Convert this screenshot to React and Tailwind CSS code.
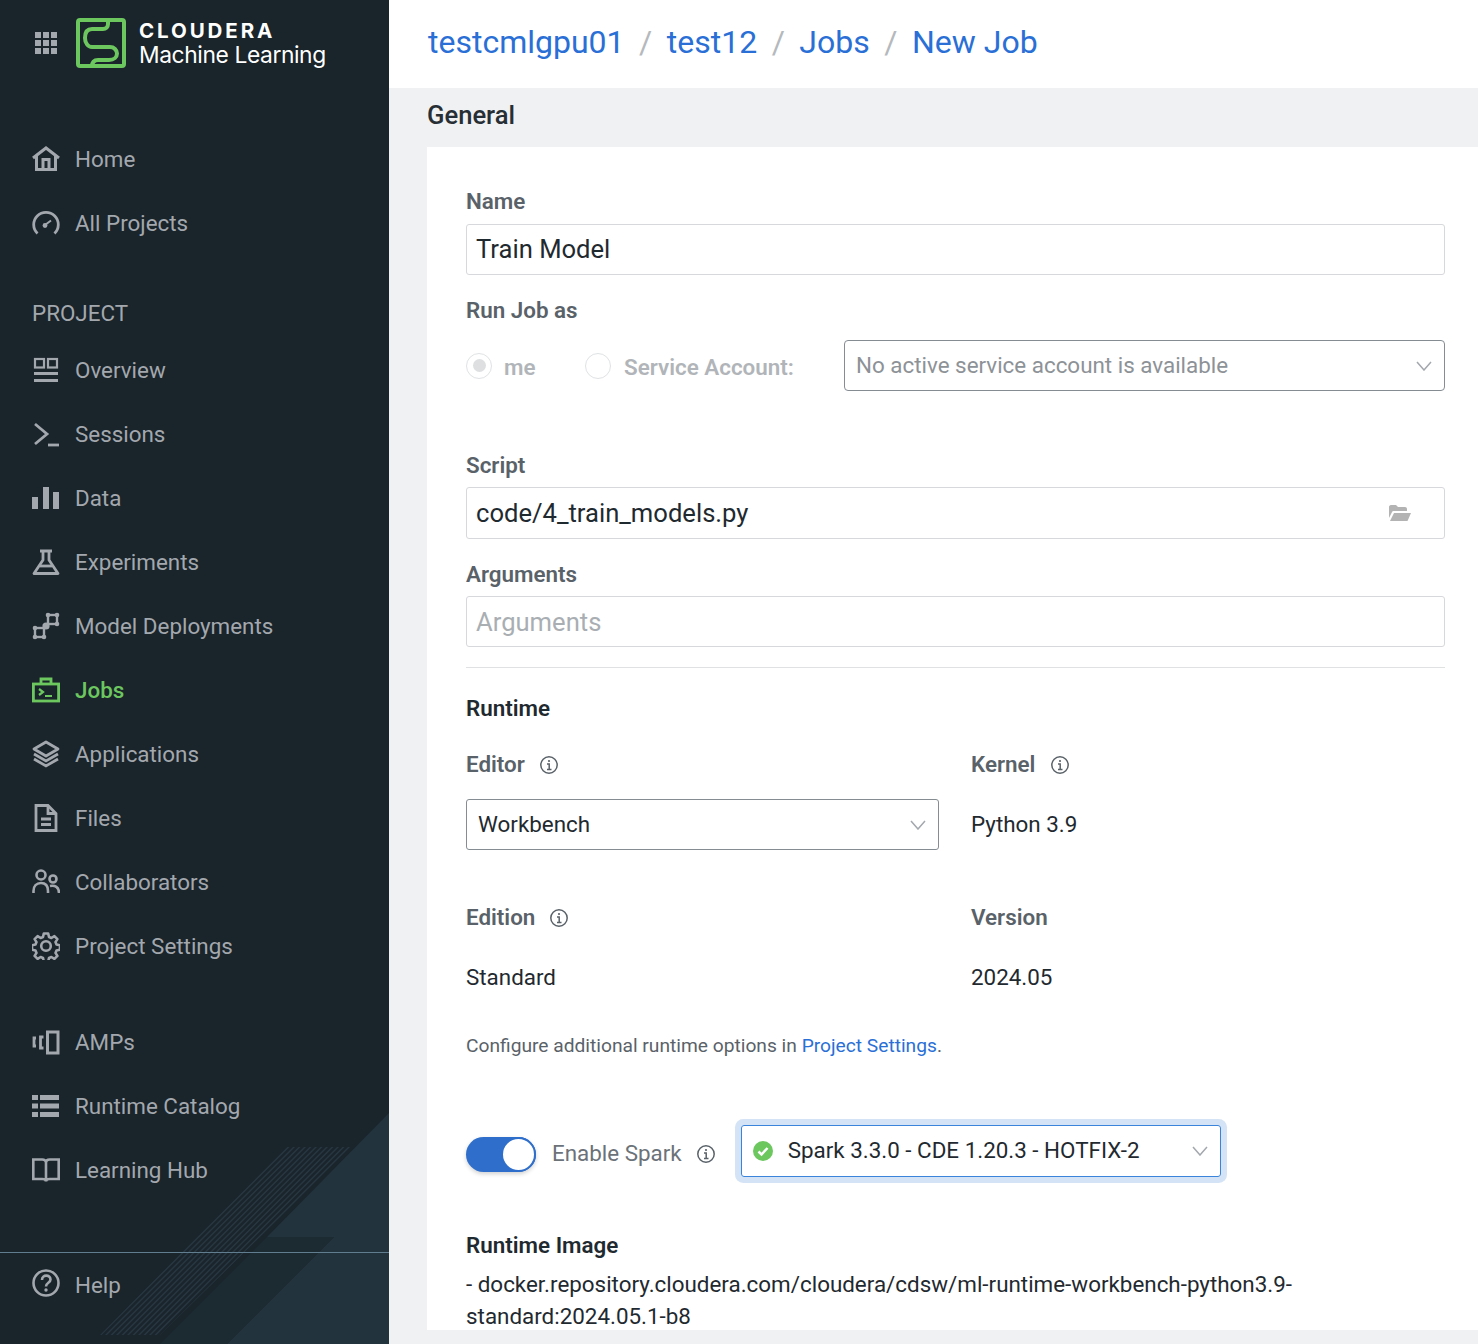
import React from "react";

const Stroke = ({ children, sw = 2.6 }) => (
  <svg viewBox="0 0 28 28" className="w-7 h-7 shrink-0" fill="none" stroke="currentColor" strokeWidth={sw}>
    {children}
  </svg>
);

const icons = {
  home: (
    <Stroke sw={3}>
      <path d="M1 13 14 3l13 10" />
      <path d="M4.500 11v13.500h19V11M11 24V14.500h6V24" />
    </Stroke>
  ),
  gauge: (
    <Stroke sw={2.8}>
      <path d="M5.500 24.500A12.300 12.300 0 1 1 22.500 24.500" />
      <path d="M13 16l6-4.500" strokeWidth="2" />
      <circle cx="13" cy="16.500" r="2.400" fill="currentColor" stroke="none" />
    </Stroke>
  ),
  overview: (
    <Stroke sw={2.2}>
      <rect x="3" y="3" width="9" height="8.500" />
      <rect x="16" y="3" width="9" height="8.500" />
      <path d="M2 17.500h24M2 24.500h24" strokeWidth="3" />
    </Stroke>
  ),
  sessions: (
    <Stroke sw={2.8}>
      <path d="M3 4l12 10L3 24" />
      <path d="M16 25h11" />
    </Stroke>
  ),
  data: (
    <svg viewBox="0 0 28 28" className="w-7 h-7 shrink-0" fill="currentColor">
      <rect x="0" y="13" width="6" height="12" />
      <rect x="11" y="3" width="6" height="22" />
      <rect x="21" y="8" width="6" height="17" />
    </svg>
  ),
  experiments: (
    <Stroke sw={2.8}>
      <path d="M8 3h12M11 3v9L2 25.500h24L17 12V3" strokeLinejoin="round" />
      <path d="M8 18h12" />
    </Stroke>
  ),
  model: (
    <Stroke sw={2.4}>
      <rect x="16" y="3" width="9" height="9" />
      <rect x="3" y="16" width="9" height="9" />
      <circle cx="14" cy="14" r="3.600" fill="currentColor" stroke="none" />
      <circle cx="16" cy="3" r="2.300" fill="currentColor" stroke="none" />
      <circle cx="25" cy="3" r="2.300" fill="currentColor" stroke="none" />
      <circle cx="25" cy="12" r="2.300" fill="currentColor" stroke="none" />
      <circle cx="3" cy="16" r="2.300" fill="currentColor" stroke="none" />
      <circle cx="3" cy="25" r="2.300" fill="currentColor" stroke="none" />
      <circle cx="12" cy="25" r="2.300" fill="currentColor" stroke="none" />
    </Stroke>
  ),
  jobs: (
    <Stroke sw={2.8}>
      <rect x="1.400" y="8" width="25.200" height="17" />
      <path d="M9 8V3h10v5" />
      <path d="M7 13l4 3-4 3M13 20h7" strokeWidth="2.200" />
    </Stroke>
  ),
  apps: (
    <Stroke sw={2.8}>
      <path d="M14 2 2 9l12 7 12-7z" strokeLinejoin="round" />
      <path d="M2 14l12 7 12-7M2 19l12 7 12-7" />
    </Stroke>
  ),
  files: (
    <Stroke sw={2.8}>
      <path d="M4 1.500h12l8 8v17H4z" />
      <path d="M16 1.500v8h8M9 15h10M9 20.500h10" />
    </Stroke>
  ),
  users: (
    <Stroke sw={2.6}>
      <circle cx="9" cy="7" r="4.500" />
      <circle cx="21" cy="11" r="3.500" />
      <path d="M1.500 25v-2c0-5 3-8 7.500-8s7 3 7 8v2M18 18c5-1 9 1 9 7" />
    </Stroke>
  ),
  settings: (
    <Stroke sw={2.6}>
      <path
        d="M11.800 1.500h4.400l.8 3.500 2.400 1 3-1.900 3 3-1.900 3 1 2.400 3.500.8v4.400l-3.500.8-1 2.400 1.900 3-3 3-3-1.900-2.400 1-.8 3.500h-4.400l-.8-3.500-2.400-1-3 1.900-3-3 1.900-3-1-2.400-3.500-.8v-4.400l3.500-.8 1-2.400-1.900-3 3-3 3 1.900 2.400-1z"
        strokeLinejoin="round"
      />
      <circle cx="14" cy="14" r="4.800" />
    </Stroke>
  ),
  amps: (
    <svg viewBox="0 0 28 28" className="w-7 h-7 shrink-0" fill="none" stroke="currentColor">
      <rect x="15.500" y="4" width="10.500" height="21" strokeWidth="3" />
      <path d="M11.500 9H8.500v11h3" strokeWidth="2.800" />
      <path d="M4 10H2v8h2" strokeWidth="2.800" />
    </svg>
  ),
  catalog: (
    <svg viewBox="0 0 28 28" className="w-7 h-7 shrink-0" fill="currentColor">
      <rect x="0" y="3" width="6" height="5" />
      <rect x="8" y="3" width="19" height="5" />
      <rect x="0" y="11.500" width="6" height="5" />
      <rect x="8" y="11.500" width="19" height="5" />
      <rect x="0" y="20" width="6" height="5" />
      <rect x="8" y="20" width="19" height="5" />
    </svg>
  ),
  book: (
    <Stroke sw={2.6}>
      <path d="M1.300 3.500h9c2 0 3.700 1 3.700 3v19c0-2-1.700-2.500-3.700-2.500h-9zM26.700 3.500h-9c-2 0-3.700 1-3.700 3v19c0-2 1.700-2.500 3.700-2.500h9z" />
    </Stroke>
  ),
  help: (
    <span className="-mt-[5px]">
      <Stroke sw={2.6}>
        <circle cx="14" cy="14" r="12.500" />
        <path d="M10 11c0-6 8.500-5.500 8.500-.5 0 3.500-4.500 3-4.500 7" />
        <circle cx="14" cy="21" r="1.700" fill="currentColor" stroke="none" />
      </Stroke>
    </span>
  ),
};

const NavItem = ({ icon, label, active }) => (
  <div className={`h-16 pl-8 flex items-center gap-[15px] ${active ? "text-[#6cc75f] font-medium" : "text-[#a3a8ae]"}`}>
    {icons[icon]}
    <span className="text-[22.400px] pt-[2px]">{label}</span>
  </div>
);

const SidebarArt = () => {
  const stripes = [];
  for (let i = 0; i < 13; i++) stripes.push(i);
  return (
    <svg className="absolute inset-0 w-[389px] h-[1344px]" viewBox="0 0 389 1344">
      <defs>
        <clipPath id="stripe-clip">
          <path d="M285 1147H352L160 1335H100Z" />
        </clipPath>
      </defs>
      <path d="M389 1113V1344H227L334 1237H267Z" fill="#22333d" />
      <path d="M267 1237H334L227 1344H160Z" fill="#1c2a32" />
      <g clipPath="url(#stripe-clip)" stroke="#273741" strokeWidth="1.500">
        {stripes.map((i) => (
          <line key={i} x1={290 + i * 5.5} y1="1140" x2={90 + i * 5.5} y2="1340" />
        ))}
      </g>
    </svg>
  );
};

const Sidebar = () => (
  <aside className="relative w-[389px] h-[1344px] shrink-0 bg-[#1a242b] overflow-hidden">
    <SidebarArt />
    <div className="relative">
      <div className="h-[127px] flex items-start">
        <div className="ml-[35px] mt-[32px] w-[22px] grid grid-cols-3 gap-[2px]">
          {[0, 1, 2, 3, 4, 5, 6, 7, 8].map((n) => (
            <span key={n} className="h-[6px] bg-[#a3a8ae]" />
          ))}
        </div>
        <svg viewBox="0 0 50 50" className="w-[50px] h-[50px] ml-[19px] mt-[18px] shrink-0" fill="none">
          <rect x="2" y="2" width="46" height="46" rx="2" stroke="#6cc75f" strokeWidth="4" />
          <path
            d="M32 2V6c0 3-2 5-5 5H16c-5 0-7 4-7 9s3 9 7 9h18c4 0 7 3 7 6.500S38 42 33 42H22c-4 0-6 2-6 6.500"
            stroke="#6cc75f"
            strokeWidth="4"
          />
        </svg>
        <div className="ml-[13px] mt-[18px] text-white font-['Inter',sans-serif]">
          <div className="text-[20.500px] leading-[25px] font-bold tracking-[2.900px]">CLOUDERA</div>
          <div className="text-[22.800px] leading-[24px] tracking-[-0.400px]">Machine Learning</div>
        </div>
      </div>
      <NavItem icon="home" label="Home" />
      <NavItem icon="gauge" label="All Projects" />
      <div className="mt-8 h-[51px] pl-8 pt-[2px] flex items-center text-[22.400px] text-[#a3a8ae]">PROJECT</div>
      <NavItem icon="overview" label="Overview" />
      <NavItem icon="sessions" label="Sessions" />
      <NavItem icon="data" label="Data" />
      <NavItem icon="experiments" label="Experiments" />
      <NavItem icon="model" label="Model Deployments" />
      <NavItem icon="jobs" label="Jobs" active />
      <NavItem icon="apps" label="Applications" />
      <NavItem icon="files" label="Files" />
      <NavItem icon="users" label="Collaborators" />
      <NavItem icon="settings" label="Project Settings" />
      <div className="mt-8" />
      <NavItem icon="amps" label="AMPs" />
      <NavItem icon="catalog" label="Runtime Catalog" />
      <NavItem icon="book" label="Learning Hub" />
      <div className="mt-[50px] border-t border-[#5f7d8f]" />
      <NavItem icon="help" label="Help" />
    </div>
  </aside>
);

const Label = ({ children, dark, className = "" }) => (
  <div className={`h-[30px] pt-[2px] flex items-center text-[22.400px] font-semibold ${dark ? "text-[#1f2a30]" : "text-[#5a6269]"} ${className}`}>
    {children}
  </div>
);

const Info = () => (
  <svg viewBox="0 0 20 20" className="w-5 h-5 shrink-0 text-[#5a6269]" fill="none" stroke="currentColor" strokeWidth="1.500">
    <circle cx="10" cy="10" r="8.200" />
    <path d="M8 9h2.200v5.500M8 14.500h4.500" />
    <circle cx="10" cy="6" r="1.100" fill="currentColor" stroke="none" />
  </svg>
);

const Chevron = () => (
  <svg viewBox="0 0 16 10" className="w-4 h-[10px] shrink-0 text-[#a3a8ae]" fill="none" stroke="currentColor" strokeWidth="1.500">
    <path d="M1 1l7 8 7-8" />
  </svg>
);

const TextInput = ({ children, muted, h = "h-[51px]" }) => (
  <div className={`${h} w-full border border-[#d6d8db] rounded-[3px] px-[9px] flex items-center text-[25.600px] ${muted ? "text-[#a9aeb3]" : "text-[#1f2a30]"}`}>
    {children}
  </div>
);

const Radio = ({ checked }) => (
  <span className="w-[26px] h-[26px] rounded-full border border-[#e0e2e4] flex items-center justify-center shrink-0">
    {checked && <span className="w-[13px] h-[13px] rounded-full bg-[#dedfe1]" />}
  </span>
);

const Value = ({ children }) => (
  <div className="mt-5 h-[51px] flex items-center text-[22.400px] text-[#1f2a30]">{children}</div>
);

const Main = () => (
  <main className="flex-1 min-w-0 h-[1344px] flex flex-col bg-[#f0f1f3] overflow-hidden font-['Roboto',sans-serif]">
    <div className="h-[88px] shrink-0 bg-white pl-[39px] pb-1 flex items-center text-[32px] text-[#2a6fd6]">
      <span>testcmlgpu01</span>
      <span className="mx-[14.500px] text-[#b5b9bd]">/</span>
      <span>test12</span>
      <span className="mx-[14.500px] text-[#b5b9bd]">/</span>
      <span>Jobs</span>
      <span className="mx-[14.500px] text-[#b5b9bd]">/</span>
      <span>New Job</span>
    </div>
    <div className="h-[59px] shrink-0 pl-[38px] pb-1 flex items-center text-[25.600px] font-medium text-[#272f35]">General</div>
    <div className="ml-[38px] h-[1183px] bg-white pt-[39px] pl-[39px] pr-[33px] overflow-hidden">
      <Label>Name</Label>
      <div className="mt-2">
        <TextInput>Train Model</TextInput>
      </div>
      <Label className="mt-5">Run Job as</Label>
      <div className="mt-[15px] flex items-center">
        <Radio checked />
        <span className="ml-[12px] w-[81px] pt-[5px] text-[22.400px] font-semibold text-[#b1b5b9]">me</span>
        <Radio />
        <span className="ml-[13px] w-[220px] pt-[5px] text-[22.400px] font-semibold text-[#b1b5b9]">Service Account:</span>
        <div className="flex-1 h-[51px] border border-[#858c92] rounded-[4px] pl-[11px] pr-3 flex items-center justify-between text-[22.400px] text-[#8d9297]">
          <span>No active service account is available</span>
          <Chevron />
        </div>
      </div>
      <Label className="mt-[59px]">Script</Label>
      <div className="mt-[7px]">
        <TextInput h="h-[52px]">
          <span className="flex-1">code/4_train_models.py</span>
          <svg viewBox="0 0 24 18" className="w-6 h-[18px] mr-[23px] text-[#b3b3b3]" fill="currentColor">
            <path d="M1 3c0-1 .7-2 2-2h5l2 2h7c1 0 2 .7 2 2v2H6c-1 0-1.800.5-2.200 1.400L1 14z" />
            <path d="M6 9h17l-3.500 8H2z" />
          </svg>
        </TextInput>
      </div>
      <Label className="mt-5">Arguments</Label>
      <div className="mt-[7px]">
        <TextInput muted>
          <span className="pt-[2px]">Arguments</span>
        </TextInput>
      </div>
      <div className="mt-5 border-t border-[#dfe1e3]" />
      <Label dark className="mt-[25px]">Runtime</Label>
      <div className="mt-[26px] grid grid-cols-[473px_1fr] gap-x-8">
        <Label className="gap-[14px]">Editor <Info /></Label>
        <Label className="gap-[15px]">Kernel <Info /></Label>
        <div className="mt-5 h-[51px] border border-[#858c92] rounded-[3px] pl-[11px] pr-3 flex items-center justify-between text-[22.400px] text-[#1f2a30]">
          <span>Workbench</span>
          <Chevron />
        </div>
        <Value>Python 3.9</Value>
        <Label className="mt-[52px] gap-[14px]">Edition <Info /></Label>
        <Label className="mt-[52px]">Version</Label>
        <Value>Standard</Value>
        <Value>2024.05</Value>
      </div>
      <div className="mt-[27px] h-[30px] pt-[2px] flex items-center text-[19.200px] text-[#5a6269] whitespace-pre">
        Configure additional runtime options in <span className="text-[#2a6fd6]">Project Settings</span>.
      </div>
      <div className="mt-[65px] flex items-start">
        <div className="mt-3 w-[70px] h-[35px] rounded-full bg-[#2f6fcb] flex justify-end items-center shadow-[0_2px_4px_rgba(0,0,0,0.18)] shrink-0">
          <span className="w-[35px] h-[35px] rounded-full bg-white border-2 border-[#2f6fcb]" />
        </div>
        <div className="ml-4 mt-[14px] h-[30px] flex items-center gap-[14px] text-[22.400px] text-[#6b7278]">
          Enable Spark <Info />
        </div>
        <div className="ml-[25px] w-[480px] h-[52px] border border-[#3b84dc] rounded-[3px] ring-[6px] ring-[#d4e3f5] pl-[11px] pr-3 flex items-center text-[22.400px] text-[#1f2a30]">
          <svg viewBox="0 0 20 20" className="w-5 h-5 shrink-0">
            <circle cx="10" cy="10" r="10" fill="#6cc75f" />
            <path d="M5.500 10.500l3 3 6-6.500" fill="none" stroke="#fff" strokeWidth="2.500" />
          </svg>
          <span className="ml-[15px] flex-1">Spark 3.3.0 - CDE 1.20.3 - HOTFIX-2</span>
          <Chevron />
        </div>
      </div>
      <Label dark className="mt-[53px]">Runtime Image</Label>
      <div className="mt-2 text-[22.400px] leading-[32px] text-[#1f2a30]">
        - docker.repository.cloudera.com/cloudera/cdsw/ml-runtime-workbench-python3.9-standard:2024.05.1-b8
      </div>
    </div>
  </main>
);

export default function App() {
  return (
    <div className="w-[1478px] h-[1344px] flex overflow-hidden font-['Roboto',sans-serif]">
      <Sidebar />
      <Main />
    </div>
  );
}
